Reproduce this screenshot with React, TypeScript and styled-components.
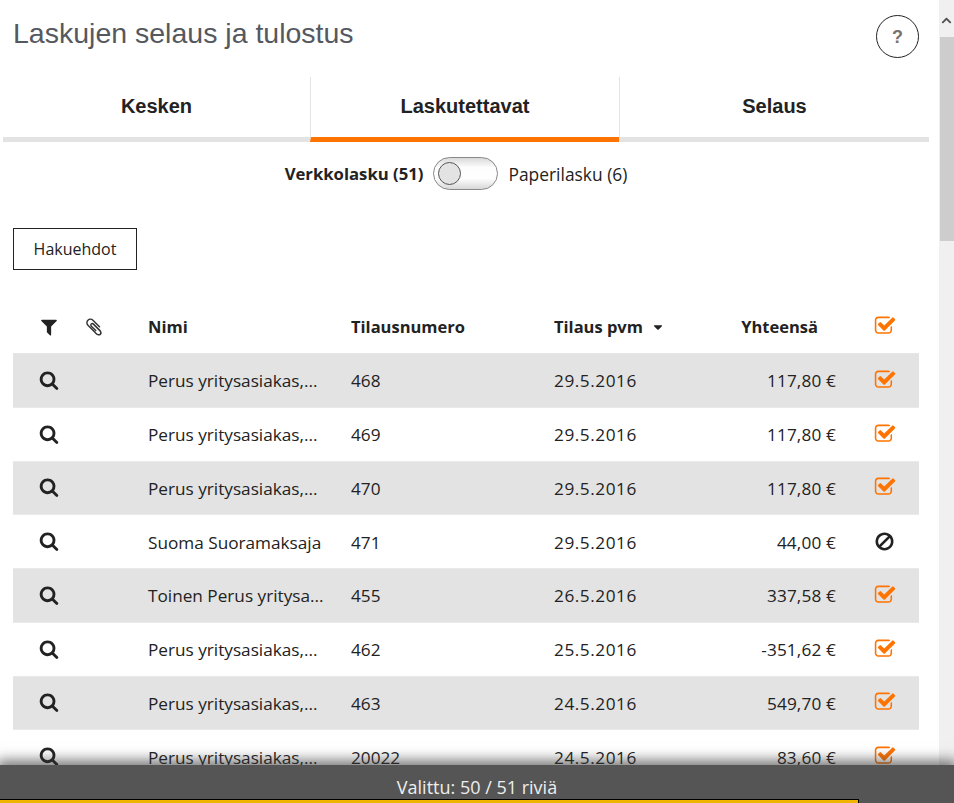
import styled, { createGlobalStyle } from 'styled-components';
import { FaCaretDown, FaChevronUp } from 'react-icons/fa';

const iconPaths = {
  filter: 'M1595 295q17 41-14 70l-493 493v742q0 42-39 59-13 5-25 5-27 0-45-19l-256-256q-19-19-19-45v-486l-493-493q-31-29-14-70 17-39 59-39h1280q42 0 59 39z',
  clip: 'M1596 1385q0 117-79 196t-196 79q-135 0-235-100l-777-776q-113-115-113-271 0-159 110-270t269-111q158 0 273 113l605 606q10 10 10 22 0 16-30.5 46.5t-46.5 30.5q-13 0-23-10l-606-607q-79-77-181-77-106 0-179 75t-73 181q0 105 76 181l776 777q63 63 134 63 57 0 95-38t38-95q0-71-63-134l-581-581q-30-30-64-30-29 0-45.5 16.5t-16.5 45.5q0 32 31 64l410 410q10 10 10 22 0 16-31 47t-47 31q-12 0-22-10l-410-410q-63-61-63-149 0-82 57-139t139-57q88 0 149 63l581 581q100 98 100 235z',
  search: 'M1216 832q0-185-131.500-316.500t-316.500-131.500-316.500 131.500-131.500 316.500 131.500 316.500 316.500 131.500 316.500-131.500 131.500-316.500zm512 832q0 52-38 90t-90 38q-54 0-90-38l-343-342q-179 124-399 124-143 0-273.500-55.500t-225-150-150-225-55.500-273.500 55.500-273.500 150-225 225-150 273.500-55.500 273.500 55.500 225 150 150 225 55.500 273.500q0 220-124 399l343 343q37 37 37 90z',
  check: 'M1472 930v318q0 119-84.500 203.500t-203.500 84.500h-832q-119 0-203.500-84.500t-84.500-203.500v-832q0-119 84.500-203.500t203.500-84.500h832q63 0 117 25 15 7 18 23 3 17-9 29l-49 49q-10 10-23 10-3 0-9-2-23-6-45-6h-832q-66 0-113 47t-47 113v832q0 66 47 113t113 47h832q66 0 113-47t47-113v-254q0-13 9-22l64-64q10-10 23-10 6 0 12 3 20 8 20 29zm231-489l-814 814q-24 24-57 24t-57-24l-430-430q-24-24-24-57t24-57l110-110q24-24 57-24t57 24l263 263 647-647q24-24 57-24t57 24l110 110q24 24 24 57t-24 57z',
  ban: 'M1440 893q0-161-87-295l-754 753q137 89 297 89 111 0 211.500-43.500t173.500-116.500 116-174.500 43-212.500zm-999 299l755-754q-135-91-300-91-148 0-273 73t-198 199-73 274q0 162 89 299zm1223-299q0 157-61 300t-163.500 246-245 164-298.500 61-298.500-61-245-164-163.500-246-61-300 61-299.500 163.500-245.500 245-164 298.500-61 298.500 61 245 164 163.500 245.500 61 299.500z',
};

const Icon = ({ name, size }: { name: keyof typeof iconPaths; size: number }) => (
  <svg width={size} height={size} viewBox="0 0 1792 1792" fill="currentColor">
    <path d={iconPaths[name]} />
  </svg>
);

const rows = [
  { name: 'Perus yritysasiakas,...', order: '468', date: '29.5.2016', total: '117,80 €' },
  { name: 'Perus yritysasiakas,...', order: '469', date: '29.5.2016', total: '117,80 €' },
  { name: 'Perus yritysasiakas,...', order: '470', date: '29.5.2016', total: '117,80 €' },
  { name: 'Suoma Suoramaksaja', order: '471', date: '29.5.2016', total: '44,00 €', blocked: true },
  { name: 'Toinen Perus yritysa...', order: '455', date: '26.5.2016', total: '337,58 €' },
  { name: 'Perus yritysasiakas,...', order: '462', date: '25.5.2016', total: '-351,62 €' },
  { name: 'Perus yritysasiakas,...', order: '463', date: '24.5.2016', total: '549,70 €' },
  { name: 'Perus yritysasiakas,...', order: '20022', date: '24.5.2016', total: '83,60 €' },
];

export default function App() {
  return (
    <>
      <GlobalStyle />
      <Page>
        <Main>
          <TitleRow>
            <Title>Laskujen selaus ja tulostus</Title>
            <HelpButton>?</HelpButton>
          </TitleRow>

          <Tabs>
            <Tab>Kesken</Tab>
            <Tab $active>Laskutettavat</Tab>
            <Tab>Selaus</Tab>
          </Tabs>

          <SwitchRow>
            <SwitchLabel $bold>Verkkolasku (51)</SwitchLabel>
            <Switch>
              <Knob />
            </Switch>
            <SwitchLabel>Paperilasku (6)</SwitchLabel>
          </SwitchRow>

          <SearchButton>Hakuehdot</SearchButton>

          <Table>
            <HeaderRow>
              <IconCell>
                <Icon name="filter" size={20} />
              </IconCell>
              <ClipCell>
                <Icon name="clip" size={20} />
              </ClipCell>
              <Cell>Nimi</Cell>
              <Cell>Tilausnumero</Cell>
              <Cell>
                Tilaus pvm
                <Sort>
                  <FaCaretDown size={14} />
                </Sort>
              </Cell>
              <HeaderTotal>Yhteensä</HeaderTotal>
              <CheckCell>
                <Icon name="check" size={22} />
              </CheckCell>
            </HeaderRow>
            {rows.map(row => (
              <Row key={row.order}>
                <IconCell>
                  <Icon name="search" size={20} />
                </IconCell>
                <ClipCell />
                <Cell>{row.name}</Cell>
                <Cell>{row.order}</Cell>
                <NumberCell>{row.date}</NumberCell>
                <TotalCell>{row.total}</TotalCell>
                <CheckCell $blocked={row.blocked}>
                  {row.blocked ? <Icon name="ban" size={21} /> : <Icon name="check" size={22} />}
                </CheckCell>
              </Row>
            ))}
          </Table>
        </Main>

        <Scrollbar>
          <ScrollArrow>
            <FaChevronUp size={11} />
          </ScrollArrow>
          <ScrollThumb />
        </Scrollbar>

        <Footer>
          <FooterText>Valittu: 50 / 51 riviä</FooterText>
          <FooterStrip />
        </Footer>
      </Page>
    </>
  );
}

const GlobalStyle = createGlobalStyle`
  html, body {
    margin: 0;
    height: 100%;
    overflow: hidden;
    background: #fff;
  }
  body {
    font-family: "Open Sans", "Liberation Sans", sans-serif;
    color: #222;
  }
`;

const Page = styled.div`
  position: relative;
  display: flex;
  height: 803px;
  overflow: hidden;
`;

const Main = styled.main`
  flex: 1;
  min-width: 0;
  display: flex;
  flex-direction: column;
  align-items: flex-start;
`;

const TitleRow = styled.div`
  align-self: stretch;
  display: flex;
  justify-content: space-between;
  align-items: flex-start;
  height: 77px;
  padding: 15px 20px 0 13px;
  box-sizing: border-box;
`;

const Title = styled.h1`
  margin: 0;
  font-family: "Liberation Sans", Arial, sans-serif;
  font-size: 28.5px;
  line-height: 37px;
  font-weight: 400;
  color: #55595f;
`;

const HelpButton = styled.button`
  width: 43px;
  height: 43px;
  padding: 0;
  border: 1px solid #222;
  border-radius: 50%;
  background: #fff;
  color: #7a716c;
  font-family: "Liberation Sans", Arial, sans-serif;
  font-size: 18px;
  font-weight: 700;
  line-height: 1;
`;

const Tabs = styled.nav`
  display: grid;
  grid-template-columns: 307px 309px 310px;
  margin-left: 3px;
`;

const Tab = styled.div<{ $active?: boolean }>`
  height: 65px;
  box-sizing: border-box;
  padding-top: 17px;
  text-align: center;
  font-family: "Liberation Sans", Arial, sans-serif;
  font-size: 20px;
  line-height: 24px;
  font-weight: 700;
  color: #222;
  border-bottom: 5px solid ${p => (p.$active ? '#ff7300' : '#e3e3e3')};
  & + & {
    border-left: 1px solid #e3e3e3;
  }
`;

const SwitchRow = styled.div`
  align-self: stretch;
  display: flex;
  justify-content: center;
  align-items: center;
  gap: 10px;
  margin-top: 15px;
  padding-right: 27px;
  height: 33px;
`;

const SwitchLabel = styled.span<{ $bold?: boolean }>`
  font-size: ${p => (p.$bold ? '16.7px' : '17.4px')};
  line-height: 22px;
  font-weight: ${p => (p.$bold ? 700 : 400)};
  color: #222;
`;

const Switch = styled.div`
  width: 65px;
  height: 33px;
  box-sizing: border-box;
  padding: 4px;
  border: 1px solid #888;
  border-radius: 17px;
  background: linear-gradient(180deg, #d9d9d9 0%, #fdfdfd 30%, #fff 65%, #d8d8d8 100%);
`;

const Knob = styled.div`
  width: 23px;
  height: 23px;
  box-sizing: border-box;
  border: 1px solid #555;
  border-radius: 50%;
  background: #e3e3e3;
`;

const SearchButton = styled.button`
  width: 124px;
  height: 42px;
  margin: 38px 0 0 13px;
  padding: 0;
  border: 1px solid #222;
  background: #fff;
  color: #222;
  font-family: inherit;
  font-size: 16px;
`;

const Table = styled.div`
  align-self: stretch;
  margin: 30px 20px 0 13px;
`;

const columns = `
  display: grid;
  grid-template-columns: 71px 64px 203px 203px 150px 132px 83px;
  align-items: center;
`;

const HeaderRow = styled.div`
  ${columns}
  height: 54px;
  font-size: 16.5px;
  font-weight: 700;
  border-bottom: 1px solid #e6e6e6;
  box-sizing: border-box;
`;

const IconCell = styled.div`
  display: flex;
  justify-content: center;
  color: #222;
`;

const CheckCell = styled.div<{ $blocked?: boolean }>`
  display: flex;
  justify-content: center;
  padding-left: 14px;
  margin-top: -2px;
  color: ${p => (p.$blocked ? '#222' : '#ff7300')};
`;

const Row = styled.div`
  ${columns}
  height: 53.75px;
  padding-top: 1px;
  font-size: 17.2px;
  box-sizing: border-box;
  border-bottom: 1px solid #eaeaea;
  &:nth-child(even) {
    background: #e3e3e3;
  }
  ${IconCell} {
    margin-top: -2px;
  }
`;

const Cell = styled.div`
  white-space: nowrap;
  display: flex;
  align-items: center;
`;

const NumberCell = styled(Cell)`
  letter-spacing: 0.55px;
`;

const ClipCell = styled.div`
  display: flex;
  color: #333;
`;

const Sort = styled.span`
  display: flex;
  margin-left: 8px;
`;

const TotalCell = styled.div`
  text-align: right;
  white-space: nowrap;
  letter-spacing: 0.15px;
`;

const HeaderTotal = styled.div`
  text-align: right;
  white-space: nowrap;
  padding-right: 18px;
`;

const Scrollbar = styled.aside`
  flex: none;
  width: 15px;
  background: #f0f0f0;
  display: flex;
  flex-direction: column;
`;

const ScrollArrow = styled.div`
  height: 37px;
  padding-top: 15px;
  box-sizing: border-box;
  display: flex;
  justify-content: center;
  color: #505050;
`;

const ScrollThumb = styled.div`
  height: 204px;
  margin-left: 1px;
  background: #cdcdcd;
`;

const Footer = styled.footer`
  position: absolute;
  left: 0;
  right: 0;
  bottom: 0;
  height: 38px;
  background: #555;
  box-shadow: 0 -2px 12px 3px rgba(50, 50, 50, 0.65);
  display: flex;
  flex-direction: column;
`;

const FooterText = styled.div`
  flex: 1;
  padding-top: 11px;
  text-align: center;
  font-size: 18px;
  line-height: 22px;
  color: #eee;
`;

const FooterStrip = styled.div`
  width: 859px;
  height: 4px;
  box-sizing: border-box;
  border-top: 1px solid #000;
  border-right: 1px solid #000;
  background: #f0b400;
`;
